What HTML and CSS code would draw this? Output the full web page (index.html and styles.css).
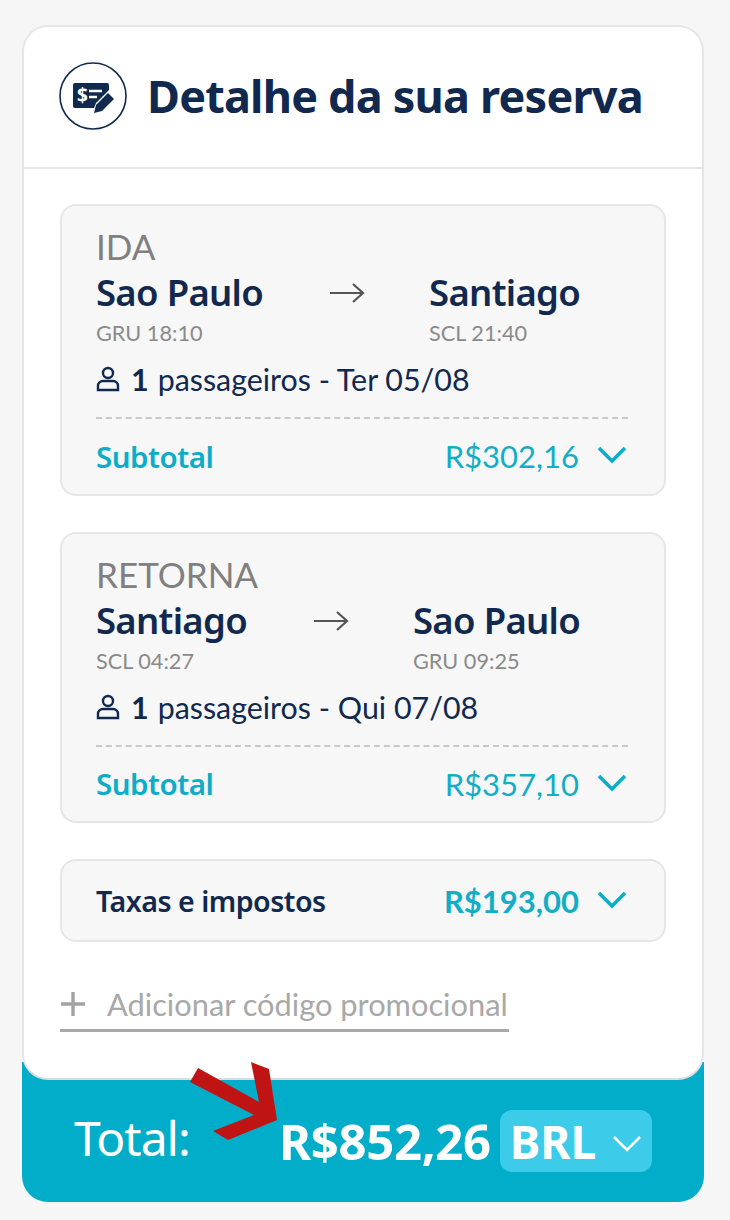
FILE: index.html
```html
<!DOCTYPE html>
<html lang="pt">
<head>
<meta charset="utf-8">
<title>Detalhe da sua reserva</title>
<link rel="stylesheet" href="styles.css">
</head>
<body>
<div class="widget">
  <section class="card">
    <header class="head">
      <svg class="head-icon" viewBox="0 0 68 68">
        <circle cx="34" cy="34" r="33" fill="none" stroke="#12294f" stroke-width="1.6"/>
        <path d="M14 23a2 2 0 0 1 2-2h32a2 2 0 0 1 2 2v5L37 41l-2 5H16a2 2 0 0 1-2-2z" fill="#12294f"/>
        <path d="M35 51l2-8 12-12 6 6-12 12z" fill="#12294f"/>
        <path d="M30 29h13M30 35h8" stroke="#fff" stroke-width="2.6" fill="none"/>
        <text x="18" y="40" class="icon-dollar">$</text>
      </svg>
      <h1 class="title">Detalhe da sua reserva</h1>
    </header>
    <div class="content">
      <article class="leg">
        <div class="leg-kind">IDA</div>
        <div class="route">
          <div class="stop"><div class="city">Sao Paulo</div><div class="code">GRU 18:10</div></div>
          <svg class="arrow" viewBox="0 0 36 24"><path d="M1 12h33M24 3l10 9-10 9" fill="none" stroke="#555" stroke-width="2.2"/></svg>
          <div class="stop"><div class="city">Santiago</div><div class="code">SCL 21:40</div></div>
        </div>
        <div class="pax">
          <svg class="pax-icon" viewBox="0 0 24 26"><circle cx="12" cy="7" r="5" fill="none" stroke="#12294f" stroke-width="2.4"/><path d="M2 24v-4a5 5 0 0 1 5-5h10a5 5 0 0 1 5 5v4z" fill="none" stroke="#12294f" stroke-width="2.4"/></svg>
          <span class="pax-num">1</span><span>passageiros - Ter 05/08</span>
        </div>
        <div class="subtotal">
          <span class="sub-label">Subtotal</span>
          <span class="sub-val">R$302,16<svg class="chev" viewBox="0 0 32 20"><path d="M3 3l13 13L29 3" fill="none" stroke="#0badc8" stroke-width="3.6"/></svg></span>
        </div>
      </article>

      <article class="leg">
        <div class="leg-kind">RETORNA</div>
        <div class="route">
          <div class="stop"><div class="city">Santiago</div><div class="code">SCL 04:27</div></div>
          <svg class="arrow" viewBox="0 0 36 24"><path d="M1 12h33M24 3l10 9-10 9" fill="none" stroke="#555" stroke-width="2.2"/></svg>
          <div class="stop"><div class="city">Sao Paulo</div><div class="code">GRU 09:25</div></div>
        </div>
        <div class="pax">
          <svg class="pax-icon" viewBox="0 0 24 26"><circle cx="12" cy="7" r="5" fill="none" stroke="#12294f" stroke-width="2.4"/><path d="M2 24v-4a5 5 0 0 1 5-5h10a5 5 0 0 1 5 5v4z" fill="none" stroke="#12294f" stroke-width="2.4"/></svg>
          <span class="pax-num">1</span><span>passageiros - Qui 07/08</span>
        </div>
        <div class="subtotal">
          <span class="sub-label">Subtotal</span>
          <span class="sub-val">R$357,10<svg class="chev" viewBox="0 0 32 20"><path d="M3 3l13 13L29 3" fill="none" stroke="#0badc8" stroke-width="3.6"/></svg></span>
        </div>
      </article>

      <div class="taxes">
        <span class="tax-label">Taxas e impostos</span>
        <span class="sub-val tax-val">R$193,00<svg class="chev" viewBox="0 0 32 20"><path d="M3 3l13 13L29 3" fill="none" stroke="#0badc8" stroke-width="3.6"/></svg></span>
      </div>

      <div class="promo">
        <svg class="plus" viewBox="0 0 26 26"><path d="M13 1v24M1 13h24" stroke="#a3a3a3" stroke-width="3.4" fill="none"/></svg>
        <span>Adicionar código promocional</span>
      </div>
    </div>
  </section>
  <footer class="total">
    <span class="total-label">Total:</span>
    <span class="total-val">R$852,26</span>
    <span class="currency">BRL<svg class="cur-chev" viewBox="0 0 30 18"><path d="M2 2l13 13L28 2" fill="none" stroke="#fff" stroke-width="2.6"/></svg></span>
  </footer>
  <svg class="red-arrow" viewBox="0 0 90 80"><path d="M8 6L69 40 61 0 79 7 87 58 38 78 23 69 64 53 0 20z" fill="#c01414"/></svg>
</div>
</body>
</html>
```
FILE: styles.css
```css
* { box-sizing: border-box; }
html, body { margin: 0; padding: 0; }
body {
  width: 730px;
  height: 1220px;
  background: #f6f6f6;
  font-family: "Lato", "Liberation Sans", sans-serif;
  overflow: hidden;
}
.widget {
  position: relative;
  width: 682px;
  margin: 25px 0 0 22px;
}
.card {
  position: relative;
  z-index: 1;
  height: 1055px;
  background: #fff;
  border: 2px solid #e6e6e6;
  border-bottom-color: #dcdcdc;
  border-radius: 26px;
}
.head {
  display: flex;
  align-items: center;
  height: 142px;
  padding: 0 0 3px 35px;
  border-bottom: 2px solid #e6e6e6;
}
.head-icon { width: 68px; height: 68px; flex: none; margin-right: 20px; }
.icon-dollar { font: 700 19px "Noto Sans", sans-serif; fill: #fff; }
.title {
  margin: 0;
  font: 700 45px/1 "Noto Sans", sans-serif;
  letter-spacing: -0.8px;
  color: #12294f;
  white-space: nowrap;
}
.content { padding: 35px 36px 0 36px; }
.leg {
  height: 291.5px;
  margin-bottom: 36px;
  padding: 24px 36px 0 34px;
  background: #f7f7f7;
  border: 2px solid #e6e6e6;
  border-radius: 16px;
}
.leg-kind {
  font-size: 35px;
  line-height: 32px;
  color: #808080;
}
.route { display: flex; align-items: flex-start; margin-top: 9px; }
.city {
  font: 600 36.5px/42px "Noto Sans", sans-serif;
  letter-spacing: -0.7px;
  color: #12294f;
  white-space: nowrap;
}
.code {
  font-size: 21.7px;
  line-height: 24px;
  color: #8a8a8a;
  margin-top: 8px;
}
.arrow { width: 36px; height: 24px; flex: none; margin: 10px 64px 0 66px; }
.pax {
  display: flex;
  align-items: center;
  height: 40px;
  margin-top: 14px;
  font-size: 30.4px;
  color: #12294f;
}
.pax-icon { width: 24px; height: 26px; margin-right: 11px; flex: none; }
.pax-num { font-weight: 700; margin-right: 9px; }
.subtotal {
  display: flex;
  justify-content: space-between;
  align-items: center;
  height: 76px;
  margin-top: 18px;
  border-top: 2px dashed #c8c8c8;
  color: #0badc8;
}
.sub-label { font: 600 29.5px "Noto Sans", sans-serif; letter-spacing: -0.5px; }
.sub-val {
  display: inline-flex;
  align-items: center;
  font-size: 31px;
  color: #12adc6;
}
.chev { width: 32px; height: 20px; margin-left: 17px; margin-top: -2px; }
.taxes {
  display: flex;
  justify-content: space-between;
  align-items: center;
  height: 83px;
  padding: 0 36px 0 34px;
  background: #f7f7f7;
  border: 2px solid #e6e6e6;
  border-radius: 16px;
}
.tax-label {
  font: 600 28.6px "Noto Sans", sans-serif;
  letter-spacing: -0.5px;
  color: #12294f;
}
.tax-val { font-weight: 700; }
.promo {
  display: flex;
  align-items: center;
  width: 449px;
  height: 53px;
  margin-top: 37px;
  border-bottom: 3px solid #a8a8a8;
  font-size: 30.8px;
  color: #a8a8a8;
  white-space: nowrap;
}
.plus { width: 26px; height: 26px; margin-right: 21px; flex: none; }
.total {
  display: flex;
  align-items: center;
  height: 140px;
  margin-top: -18px;
  padding: 18px 0 0 52px;
  background: #02adca;
  border-radius: 0 0 26px 26px;
  color: #fff;
}
.total-label { font: 400 48px "Noto Sans", sans-serif; letter-spacing: -1px; margin-top: -8px; }
.total-val {
  font: 700 49px "Noto Sans", sans-serif;
  letter-spacing: -0.3px;
  margin-left: 89px;
}
.currency {
  display: inline-flex;
  align-items: center;
  width: 152px;
  height: 62px;
  margin-left: 9px;
  padding-left: 10px;
  background: #3ccbe8;
  border-radius: 12px;
  font: 700 46px "Noto Sans", sans-serif;
}
.cur-chev { width: 30px; height: 18px; margin-left: 16px; margin-top: 6px; }
.red-arrow {
  position: absolute;
  z-index: 2;
  left: 168px;
  top: 1037px;
  width: 90px;
  height: 80px;
}
```
